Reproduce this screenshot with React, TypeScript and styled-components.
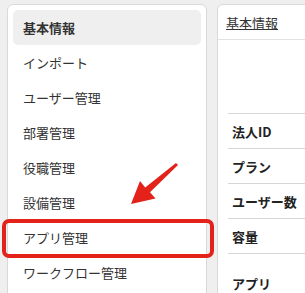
import React from 'react';
import styled, { createGlobalStyle } from 'styled-components';

const GlobalStyle = createGlobalStyle`
	html, body {
		margin: 0;
		padding: 0;
		background: #efefef;
		overflow: hidden;
	}
	body {
		font-family: 'Noto Sans CJK JP', 'Liberation Sans', sans-serif;
		color: #333;
	}
`;

const menuItems = [
	'基本情報',
	'インポート',
	'ユーザー管理',
	'部署管理',
	'役職管理',
	'設備管理',
	'アプリ管理',
	'ワークフロー管理',
];

const infoRows = ['法人ID', 'プラン', 'ユーザー数', '容量'];

const App: React.FC = () => {
	return (
		<Page>
			<GlobalStyle />
			<SideMenu>
				{menuItems.map((label, i) => (
					<MenuItem key={label} $active={i === 0}>
						{label}
					</MenuItem>
				))}
			</SideMenu>
			<Panel>
				<PanelHeader>
					<HeaderLink>基本情報</HeaderLink>
				</PanelHeader>
				<InfoTable>
					{infoRows.map((label) => (
						<InfoRow key={label}>
							<InfoLabel>{label}</InfoLabel>
						</InfoRow>
					))}
					<InfoRow $tall>
						<InfoLabel>アプリ</InfoLabel>
					</InfoRow>
				</InfoTable>
			</Panel>

			<Highlight />
			<Arrow viewBox='0 0 305 293'>
				<polygon
					points='131,204 140,181 145.2,187.6 176,162.9 178,165.1 150,192.3 155.5,198.5'
					fill='#e3221a'
				/>
			</Arrow>
		</Page>
	);
};

export default App;

const Page = styled.div`
	position: relative;
	display: flex;
	align-items: flex-start;
	gap: 10px;
	width: 305px;
	height: 293px;
	padding: 4px 0 0 7px;
	box-sizing: border-box;
	overflow: hidden;
`;

const SideMenu = styled.nav`
	flex: 0 0 200px;
	box-sizing: border-box;
	background: #fff;
	border: 1px solid #d9d9d9;
	border-radius: 6px;
	padding: 5px;
	height: 320px;
`;

const MenuItem = styled.div<{ $active?: boolean }>`
	display: flex;
	align-items: center;
	height: 35px;
	padding-left: 10px;
	border-radius: 5px;
	font-size: 13px;
	color: #333;
	font-weight: ${({ $active }) => ($active ? 700 : 400)};
	background: ${({ $active }) => ($active ? '#efefef' : 'transparent')};
`;

const Panel = styled.section`
	flex: 0 0 300px;
	box-sizing: border-box;
	background: #fff;
	border: 1px solid #d9d9d9;
	border-radius: 6px;
	height: 320px;
`;

const PanelHeader = styled.div`
	display: flex;
	align-items: center;
	height: 34px;
	padding-left: 8px;
	border-bottom: 1px solid #e2e2e2;
`;

const HeaderLink = styled.a`
	font-size: 13px;
	color: #333;
	text-decoration: underline;
`;

const InfoTable = styled.div`
	margin: 73px 0 0 10px;
`;

const InfoRow = styled.div<{ $tall?: boolean }>`
	display: flex;
	align-items: ${({ $tall }) => ($tall ? 'flex-start' : 'center')};
	height: ${({ $tall }) => ($tall ? '60px' : '34px')};
	padding: ${({ $tall }) => ($tall ? '20px 0 0 4px' : '0 0 0 4px')};
	border-top: 1px solid #d6d6d6;
`;

const InfoLabel = styled.span`
	font-size: 13px;
	font-weight: 700;
	color: #222;
`;

const Highlight = styled.div`
	position: absolute;
	left: 2px;
	top: 219px;
	width: 212px;
	height: 39px;
	box-sizing: border-box;
	border: 4px solid #e3221a;
	border-radius: 7px;
	pointer-events: none;
`;

const Arrow = styled.svg`
	position: absolute;
	left: 0;
	top: 0;
	width: 305px;
	height: 293px;
	pointer-events: none;
`;
